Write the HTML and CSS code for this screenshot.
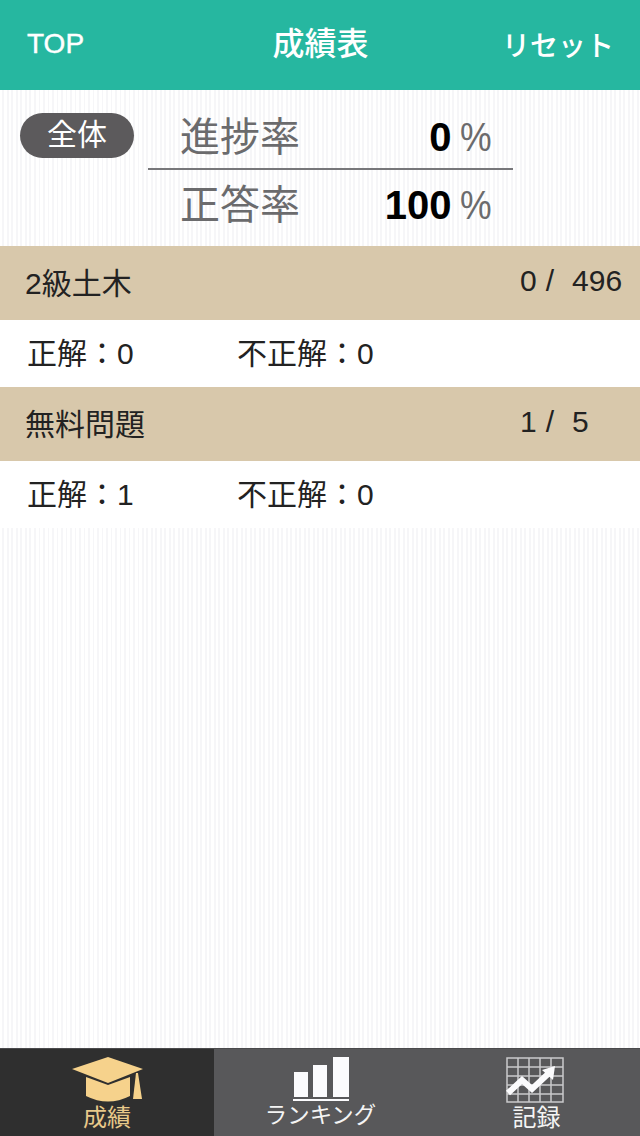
FILE: index.html
```html
<!DOCTYPE html>
<html lang="ja">
<head>
<meta charset="utf-8">
<title>成績表</title>
<link rel="stylesheet" href="styles.css">
</head>
<body>
<div class="app">
  <header class="header">
    <span class="head-left">TOP</span>
    <h1 class="head-title">成績表</h1>
    <span class="head-right">リセット</span>
  </header>
  <main class="main">
    <section class="summary">
      <span class="pill">全体</span>
      <div class="rates">
        <div class="rate rate-top"><span class="rate-label">進捗率</span><span class="rate-value"><b>0</b><i>%</i></span></div>
        <div class="rate rate-bottom"><span class="rate-label">正答率</span><span class="rate-value"><b>100</b><i>%</i></span></div>
      </div>
    </section>
    <section>
      <div class="cat"><span>2級土木</span><span class="cat-count">0 /&nbsp; 496</span></div>
      <div class="detail"><span class="ok">正解：0</span><span>不正解：0</span></div>
      <div class="cat"><span>無料問題</span><span class="cat-count">1 /&nbsp; 5</span></div>
      <div class="detail"><span class="ok">正解：1</span><span>不正解：0</span></div>
    </section>
  </main>
  <nav class="tabs">
    <div class="tab tab-active">
      <svg class="icon" width="72" height="46" viewBox="0 0 72 46">
        <path class="cap-fill" d="M1 12 37 0 72 12 37 26Z"/>
        <path class="cap-fill" d="M15 20 37 28 59 20V39Q37 50 15 39Z"/>
        <path class="cap-fill" d="M65 16H67L71 42H62Z"/>
      </svg>
      <span class="tab-label">成績</span>
    </div>
    <div class="tab">
      <svg class="icon" width="58" height="46" viewBox="0 0 58 46">
        <path class="bar-fill" d="M2 15H16V40H2ZM21 8H35V40H21ZM41 0H57V40H41Z"/>
        <path class="bar-fill" d="M1 42H57V44H1Z"/>
      </svg>
      <span class="tab-label tab-label-small">ランキング</span>
    </div>
    <div class="tab">
      <svg class="icon icon-record" width="58" height="46" viewBox="0 0 58 46">
        <path class="grid" d="M1 1H57V45H1ZM12 1V45M23 1V45M34 1V45M45 1V45M1 10H57M1 19H57M1 28H57M1 37H57"/>
        <path class="trend" d="M2 36 16 23 26 32 42 17"/>
        <path class="bar-fill" d="M36 13 49 9 47 23Z"/>
      </svg>
      <span class="tab-label tab-label-record">記録</span>
    </div>
  </nav>
</div>
</body>
</html>
```
FILE: styles.css
```css
* { box-sizing: border-box; }
html, body { margin: 0; padding: 0; }
body {
  font-family: "Liberation Sans", "Noto Sans CJK JP", sans-serif;
  color: #222;
}
.app {
  width: 640px;
  height: 1136px;
  display: flex;
  flex-direction: column;
  overflow: hidden;
}
.header {
  height: 90px;
  flex: none;
  background: #26b7a0;
  color: #fff;
  display: grid;
  grid-template-columns: 1fr auto 1fr;
  align-items: center;
  padding: 0 26px 3px 27px;
  font-size: 28px;
  font-weight: 500;
}
.head-left { -webkit-text-stroke: 0.4px #fff; }
.head-title { margin: 0; font-size: 32px; font-weight: 500; line-height: 1; }
.head-right { justify-self: end; }
.main {
  flex: 1;
  background: repeating-linear-gradient(90deg, #fff 0, #fff 2.5px, #f6f6f8 2.5px, #f6f6f8 4.5px);
}
.summary {
  height: 156px;
  padding: 23px 0 0 20px;
  display: flex;
  align-items: flex-start;
  gap: 14px;
}
.pill {
  width: 114px;
  height: 45px;
  border-radius: 23px;
  background: #5c5a5c;
  color: #fff;
  font-size: 30px;
  line-height: 44px;
  text-align: center;
}
.rates { width: 365px; margin-top: 1px; }
.rate {
  display: flex;
  align-items: center;
  justify-content: space-between;
  color: #6b6b6d;
}
.rate-top { height: 56px; border-bottom: 2px solid #77777a; padding: 0 21px 8px 32px; }
.rate-bottom { height: 66px; padding: 3px 21px 0 32px; }
.rate-label { font-size: 40px; line-height: 1; }
.rate-value { display: flex; align-items: baseline; gap: 5px; line-height: 1; }
.rate-value b { font-size: 40px; color: #000; font-weight: 700; }
.rate-value i { font-size: 40px; font-style: normal; transform: scaleX(0.89); transform-origin: right center; }
.cat {
  height: 74px;
  background: #d8c8ab;
  display: flex;
  align-items: center;
  padding: 0 0 4px 25px;
  font-size: 30px;
}
.cat-count {
  margin-left: auto;
  width: 120px;
  white-space: nowrap;
  word-spacing: 0.7px;
}
.detail {
  height: 67px;
  background: #fff;
  display: flex;
  align-items: center;
  padding: 0 0 6px 27px;
  font-size: 30px;
}
.ok { width: 210px; }
.tabs {
  height: 88px;
  flex: none;
  background: #58585a;
  border-top: 1px solid #4a4a4c;
  display: grid;
  grid-template-columns: 214px 213px 213px;
}
.tab {
  display: flex;
  flex-direction: column;
  align-items: center;
  color: #f4f4f4;
  padding-top: 8px;
}
.tab-active { background: #2f2f2f; color: #e8c98a; }
.icon { display: block; flex: none; }
.icon-record { margin-left: 3px; }
.tab-label { font-size: 24px; line-height: 30px; }
.tab-label-small { font-size: 22.4px; margin-top: -2px; }
.tab-label-record { margin-left: 6px; }
.cap-fill { fill: #f6d28c; }
.bar-fill { fill: #fbfbfd; }
.grid { fill: none; stroke: #c9c9cb; stroke-width: 1.5; }
.trend { fill: none; stroke: #fbfbfd; stroke-width: 6; }
```
